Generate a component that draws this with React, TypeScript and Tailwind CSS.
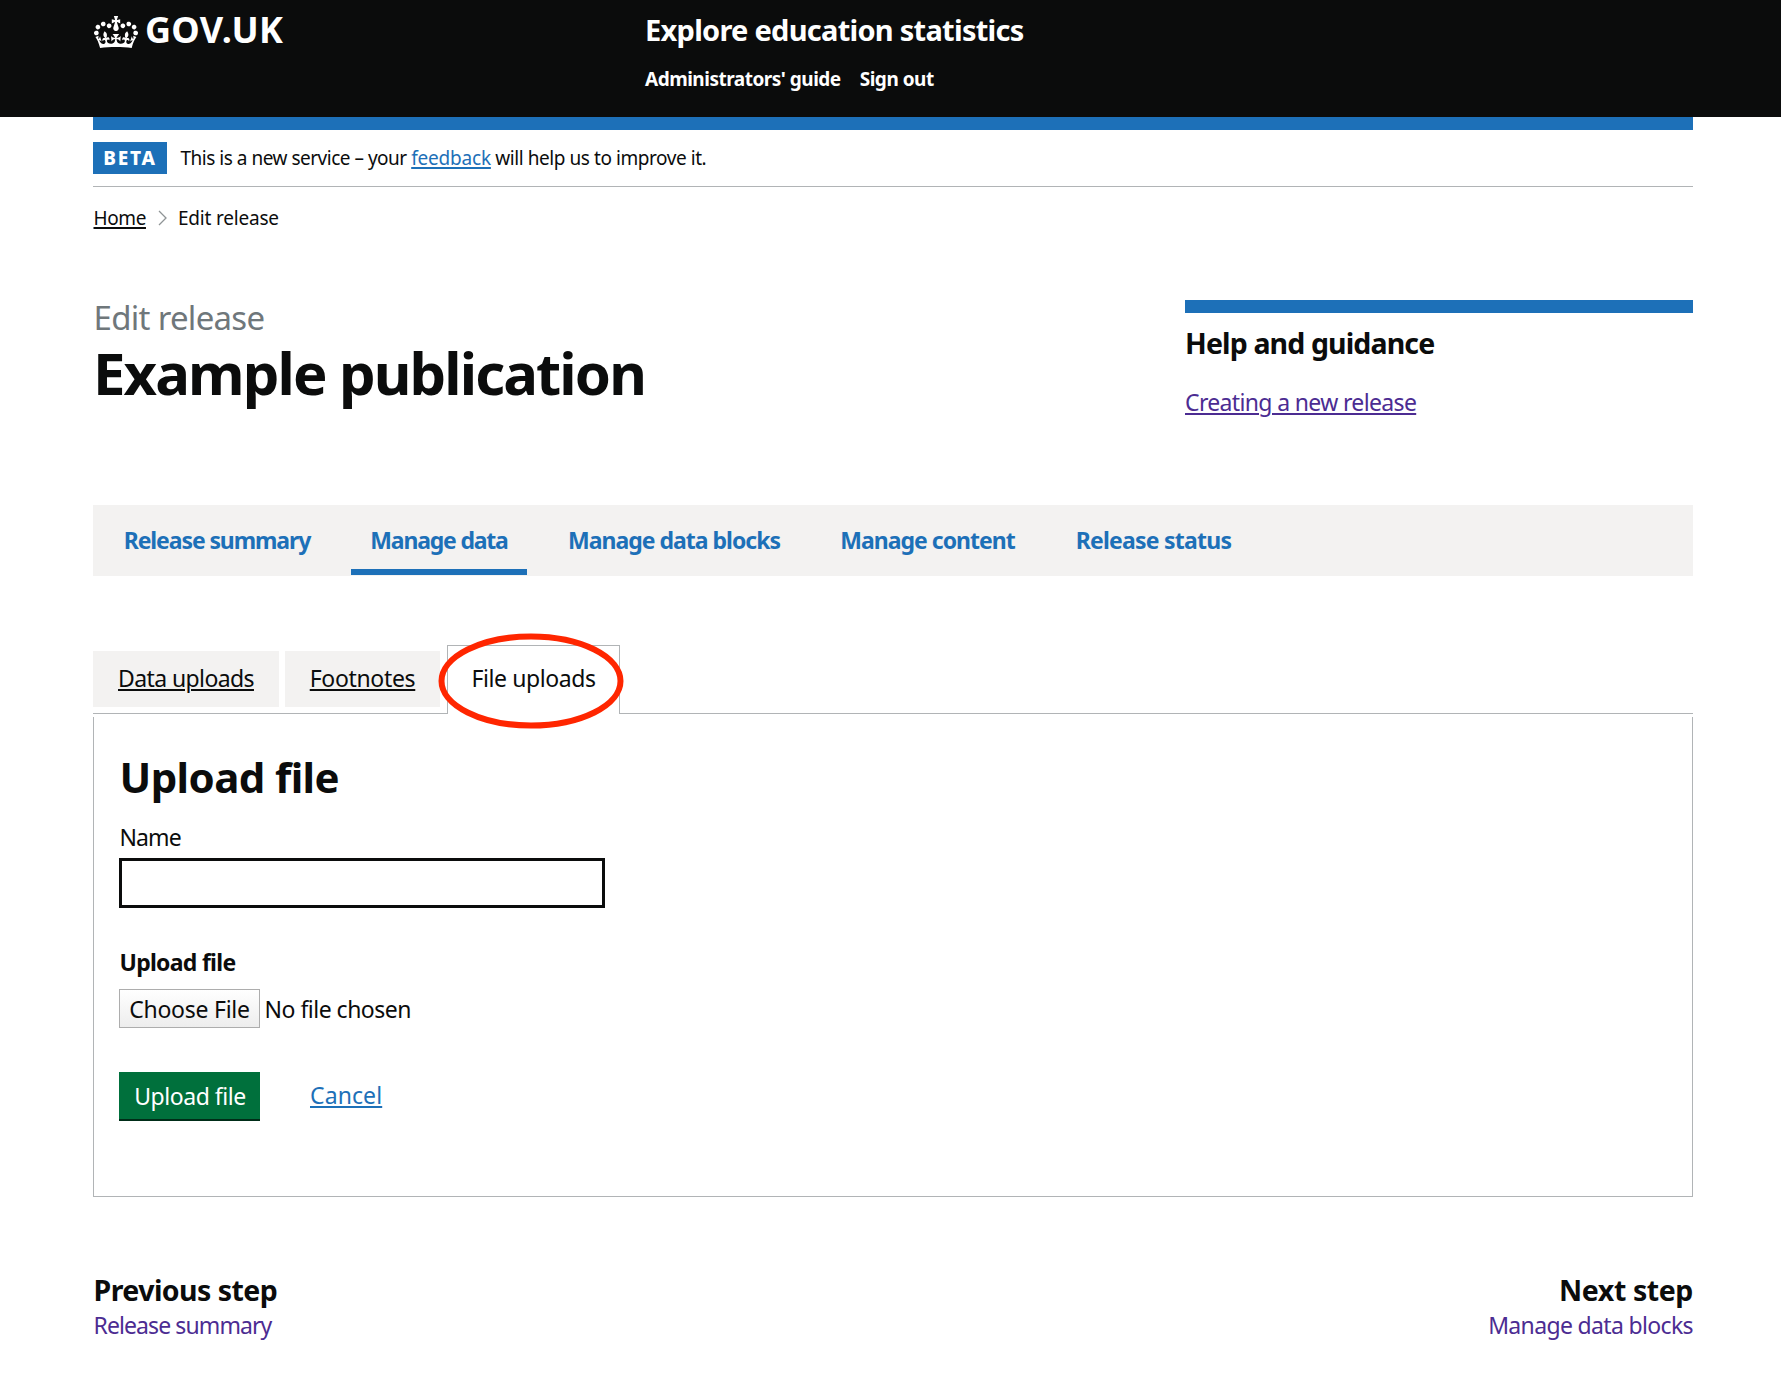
const navItems = [
  { label: "Release summary", box: "w-[228px] tracking-[-1.1px]" },
  { label: "Manage data", box: "w-[176px] tracking-[-1.2px]", active: true },
  { label: "Manage data blocks", box: "ml-px w-[252px] tracking-[-1px]" },
  { label: "Manage content", box: "w-[215px] tracking-[-1px]" },
  { label: "Release status", box: "w-[197px] tracking-[-0.75px]" },
];

function Crown() {
  return (
    <svg viewBox="0 0 132 97" className="mt-[7px] ml-[0.5px] h-[32.5px] w-[44px] fill-white" aria-hidden="true">
      <path d="M25 30.2c3.5 1.5 7.7-.2 9.1-3.7 1.5-3.6-.2-7.8-3.9-9.2-3.6-1.4-7.6.3-9.1 3.9-1.4 3.5.3 7.5 3.9 9zM9 39.5c3.6 1.5 7.8-.2 9.2-3.7 1.5-3.6-.2-7.8-3.9-9.1-3.6-1.5-7.6.2-9.1 3.8-1.4 3.5.3 7.5 3.8 9zM4.4 57.2c3.5 1.5 7.7-.2 9.1-3.8 1.5-3.6-.2-7.7-3.9-9.1-3.5-1.5-7.6.3-9.1 3.8-1.4 3.5.3 7.6 3.9 9.1zm38.3-21.4c3.5 1.5 7.7-.2 9.1-3.8 1.5-3.6-.2-7.7-3.9-9.1-3.6-1.5-7.6.3-9.1 3.8-1.3 3.6.4 7.7 3.9 9.1zm64.4-5.6c-3.6 1.5-7.8-.2-9.1-3.7-1.5-3.6.2-7.8 3.8-9.2 3.6-1.4 7.7.3 9.2 3.9 1.3 3.5-.4 7.5-3.9 9zm15.9 9.3c-3.6 1.5-7.7-.2-9.1-3.7-1.5-3.6.2-7.8 3.7-9.1 3.6-1.5 7.7.2 9.2 3.8 1.5 3.5-.3 7.5-3.8 9zm4.7 17.7c-3.6 1.5-7.8-.2-9.2-3.8-1.5-3.6.2-7.7 3.9-9.1 3.6-1.5 7.7.3 9.2 3.8 1.3 3.5-.4 7.6-3.9 9.1zM89.3 35.8c-3.6 1.5-7.8-.2-9.2-3.8-1.4-3.6.2-7.7 3.9-9.1 3.6-1.5 7.7.3 9.2 3.8 1.4 3.6-.3 7.7-3.9 9.1zM69.7 17.7l8.9 4.7V9.3l-8.9 2.8c-.2-.3-.5-.6-.9-.9L72.4 0H59.6l3.5 11.2c-.3.3-.6.5-.9.9l-8.8-2.8v13.1l8.8-4.7c.3.3.6.7.9.9l-5 15.4v.1c-.2.8-.4 1.6-.4 2.4 0 4.1 3.1 7.5 7 8.1h.2c.3 0 .7.1 1 .1.4 0 .7 0 1-.1h.2c4-.6 7.1-4.1 7.1-8.1 0-.8-.1-1.7-.4-2.4V34l-5.1-15.4c.4-.2.7-.6 1-.9zM66 92.8c16.9 0 32.8 1.1 47.1 3.2 4-16.9 8.9-26.7 14-33.5l-9.6-3.4c1 4.9 1.1 7.2 0 10.2-1.5-1.4-3-4.3-4.2-8.7L108.6 76c2.8-2 5-3.2 7.5-3.3-4.4 9.4-10 11.9-13.6 11.2-4.3-.8-6.3-4.6-5.6-7.9 1-4.7 5.7-5.9 8-.5 4.3-8.7-3-11.4-7.6-8.8 7.1-7.2 7.9-13.5 2.1-21.1-8 6.1-8.1 12.3-4.5 20.8-4.7-5.4-12.1-2.5-9.5 6.2 3.4-5.2 7.9-2 7.2 3.1-.6 4.3-6.4 7.8-13.5 7.2-10.3-.9-10.9-8-11.2-13.8 2.5-.5 7.1 1.8 11 7.3L80.2 60c-4.1 4.4-8 5.3-12.3 5.4 1.4-4.4 8-11.6 8-11.6H55.5s6.4 7.2 7.9 11.6c-4.2-.1-8-1-12.3-5.4l1.4 16.4c3.9-5.5 8.5-7.7 10.9-7.3-.3 5.8-.9 12.8-11.1 13.8-7.2.6-12.9-2.9-13.5-7.2-.7-5 3.8-8.3 7.1-3.1 2.7-8.7-4.6-11.6-9.4-6.2 3.7-8.5 3.6-14.7-4.6-20.8-5.8 7.6-5 13.9 2.2 21.1-4.7-2.6-11.9.1-7.7 8.8 2.3-5.5 7.1-4.2 8.1.5.7 3.3-1.3 7.1-5.7 7.9-3.5.7-9-1.8-13.5-11.2 2.5.1 4.7 1.3 7.5 3.3l-4.7-15.4c-1.2 4.4-2.7 7.2-4.3 8.7-1.1-3-.9-5.3 0-10.2l-9.5 3.4c5 6.9 9.9 16.7 14 33.5 14.8-2.1 30.8-3.2 47.7-3.2z" />
    </svg>
  );
}

export default function App() {
  return (
    <div className="h-[1385px] w-[1781px] overflow-hidden bg-white font-['Noto_Sans',sans-serif] text-[23px] leading-[28px] text-[#0b0c0c]">
      <header className="h-[117px] bg-[#0b0c0c] pl-[93px] text-white">
        <div className="flex pt-[10px]">
          <a className="-mt-px flex w-[552px]">
            <Crown />
            <span className="mt-px ml-[7.5px] text-[36px] leading-[40px] font-bold tracking-[0.3px]">GOV.UK</span>
          </a>
          <div>
            <div className="text-[29px] leading-[40px] font-bold tracking-[-0.73px]">Explore education statistics</div>
            <nav className="mt-[17px] flex gap-[19px] text-[19px] leading-[24px] font-bold tracking-[-0.5px]">
              <a>Administrators' guide</a>
              <a>Sign out</a>
            </nav>
          </div>
        </div>
      </header>

      <div className="ml-[93px] w-[1600px]">
        <div className="h-[13px] bg-[#1d70b8]" />
        <div className="flex h-[57px] items-center border-b border-[#b1b4b6] text-[19px]">
          <strong className="h-[32px] w-[74px] bg-[#1d70b8] text-center text-[19px] leading-[33px] font-extrabold tracking-[1.8px] text-white">BETA</strong>
          <span className="ml-[13.5px] leading-[32px] tracking-[-0.44px]">
            <span className="tracking-[-0.49px]">This is a new service – your </span>
            <a className="tracking-[-0.2px] text-[#1d70b8] underline decoration-2 underline-offset-2">feedback</a> will help us to improve it.
          </span>
        </div>

        <nav className="mt-[19px] flex h-[24px] items-center pl-[0.5px] text-[19px] leading-[24px] tracking-[-0.4px]">
          <a className="underline decoration-2 underline-offset-2">Home</a>
          <svg viewBox="0 0 10 16" className="ml-[12px] h-[16px] w-[10px] fill-none stroke-[#8f9496] stroke-[1.3]">
            <path d="M1 1l7 7-7 7" />
          </svg>
          <span className="ml-[10px] tracking-[-0.2px]">Edit release</span>
        </nav>

        <div className="mt-[68px] flex h-[207px] justify-between">
          <div>
            <div className="pl-[0.5px] text-[33px] leading-[40px] tracking-[-0.7px] text-[#6f777b]">Edit release</div>
            <h1 className="mt-[2.5px] text-[58px] leading-[64px] font-bold tracking-[-1.88px]">Example publication</h1>
          </div>
          <aside className="mt-[2px] w-[508px]">
            <div className="h-[13px] bg-[#1d70b8]" />
            <h2 className="mt-[13.5px] text-[28.5px] leading-[32px] font-bold tracking-[-0.87px]">Help and guidance</h2>
            <a className="mt-[29px] inline-block tracking-[-0.65px] text-[#4c2c92] underline decoration-2 underline-offset-2">Creating a new release</a>
          </aside>
        </div>

        <nav className="flex h-[71px] gap-[20px] bg-[#f3f2f1] pl-[10px] font-bold text-[#1d70b8]">
          {navItems.map((item) => (
            <a
              key={item.label}
              className={`${item.box} h-[70px] border-b-[6px] text-center leading-[70px] whitespace-nowrap ${item.active ? "border-[#1d70b8]" : "border-transparent"}`}
            >
              {item.label}
            </a>
          ))}
        </nav>

        <div className="mt-[69px] flex h-[69px] items-end border-b border-[#b1b4b6] text-center tracking-[-0.4px]">
          <a className="mb-[6px] h-[56px] w-[186px] bg-[#f3f2f1] leading-[54px] tracking-[-0.6px] underline decoration-2 underline-offset-2">Data uploads</a>
          <a className="mb-[6px] ml-[6px] h-[56px] w-[155px] bg-[#f3f2f1] leading-[54px] tracking-[-0.33px] underline decoration-2 underline-offset-2">Footnotes</a>
          <a className="relative -mb-px ml-[7px] h-[69px] w-[173px] border border-b-0 border-[#b1b4b6] bg-white leading-[64px]">
            File uploads
            <svg viewBox="0 0 186 96" className="absolute -top-[13.5px] -left-[10.5px] h-[96px] w-[186px] max-w-none fill-none stroke-[#ff2600] stroke-[6]">
              <ellipse cx="93" cy="48" rx="89.5" ry="44.5" />
            </svg>
          </a>
        </div>

        <section className="mt-[3px] h-[480px] border border-t-0 border-[#b1b4b6] pt-[36px] pl-[25px]">
          <h2 className="pl-[0.5px] text-[42px] leading-[48px] font-bold tracking-[-0.6px]">Upload file</h2>
          <label className="mt-[22px] block pl-[0.5px] tracking-[-0.9px]">Name</label>
          <input className="mt-[7px] block h-[50px] w-[486px] border-[3px] border-[#0b0c0c]" />
          <div className="mt-[40px] pl-[0.5px] font-bold tracking-[-0.72px]">Upload file</div>
          <div className="mt-[13px] flex h-[39px] leading-[38px]">
            <button className="w-[141px] border border-[#adadad] bg-linear-to-b from-white to-[#ededed] tracking-[-0.25px]">Choose File</button>
            <span className="ml-[4.5px] leading-[40px] tracking-[-0.5px]">No file chosen</span>
          </div>
          <div className="mt-[44px] flex leading-[47px]">
            <button className="h-[49px] w-[141px] border-b-2 border-[#002d18] bg-[#00703c] pl-px leading-[48px] tracking-[-0.45px] text-white">Upload file</button>
            <a className="ml-[50px] leading-[47px] tracking-[0.1px] text-[#1d70b8] underline decoration-2 underline-offset-2">Cancel</a>
          </div>
        </section>

        <nav className="mt-[77px] flex justify-between">
          <div className="pl-[0.5px]">
            <div className="text-[28.5px] leading-[32px] font-bold tracking-[-0.55px]">Previous step</div>
            <a className="mt-[5px] block tracking-[-0.9px] text-[#4c2c92]">Release summary</a>
          </div>
          <div className="text-right">
            <div className="text-[28.5px] leading-[32px] font-bold tracking-[-0.4px]">Next step</div>
            <a className="mt-[5px] block tracking-[-0.65px] text-[#4c2c92]">Manage data blocks</a>
          </div>
        </nav>
      </div>
    </div>
  );
}
